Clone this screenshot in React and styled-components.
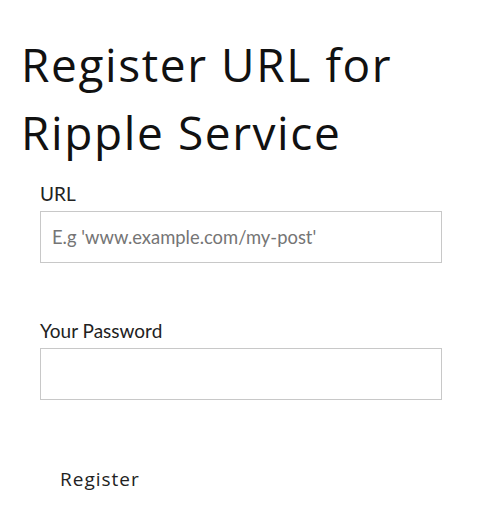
import React from "react";
import styled, { createGlobalStyle } from "styled-components";

const Global = createGlobalStyle`
  html, body { margin: 0; padding: 0; background: #fff; }
  body { font-family: "Open Sans", sans-serif; color: #111; }
`;

const Page = styled.div`
  padding: 30px 0 0 21px;
`;

const Title = styled.h1`
  margin: 0;
  font-family: "Open Sans", sans-serif;
  font-weight: 400;
  font-size: 46px;
  line-height: 68px;
  color: #111;
  letter-spacing: 1.6px;
`;

const Form = styled.form`
  display: flex;
  flex-direction: column;
  padding: 14px 37px 0 19px;
`;

const Field = styled.div`
  display: flex;
  flex-direction: column;
  margin-bottom: ${(p) => p.$gap || 0}px;
`;

const Label = styled.label`
  font-family: Lato, sans-serif;
  font-size: 19px;
  line-height: 27px;
  color: #222;
  margin-bottom: 4px;
`;

const Input = styled.input`
  box-sizing: border-box;
  height: 52px;
  width: 402px;
  border: 1px solid #c8c8c8;
  padding: 0 11px;
  font-family: Lato, sans-serif;
  font-size: 18.4px;
  color: #222;
  outline: none;
  &::placeholder { color: #757575; }
`;

const Button = styled.button`
  align-self: flex-start;
  background: #fff;
  border: none;
  padding: 10px 20px;
  font-family: "Open Sans", sans-serif;
  font-size: 19px;
  letter-spacing: 1px;
  color: #222;
  cursor: pointer;
`;

export default function App() {
  return (
    <>
      <Global />
      <Page>
        <Title>Register URL for<br />Ripple Service</Title>
        <Form onSubmit={(e) => e.preventDefault()}>
          <Field $gap={54}>
            <Label>URL</Label>
            <Input placeholder="E.g 'www.example.com/my-post'" />
          </Field>
          <Field $gap={56}>
            <Label>Your Password</Label>
            <Input type="password" />
          </Field>
          <Button type="submit">Register</Button>
        </Form>
      </Page>
    </>
  );
}
